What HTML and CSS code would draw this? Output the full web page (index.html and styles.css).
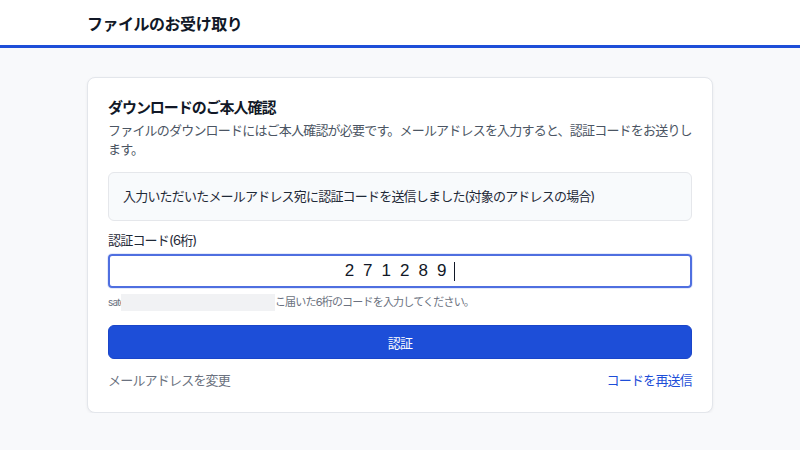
FILE: index.html
```html
<!DOCTYPE html>
<html lang="ja">

<head>
    <meta charset="UTF-8">
    <meta name="viewport" content="width=device-width, initial-scale=1.0">
    <title>ファイルのお受け取り</title>
    <link rel="stylesheet" href="styles.css">
</head>

<body>
    <header class="topbar">
        <div class="topbar-inner">
            <h1>ファイルのお受け取り</h1>
        </div>
    </header>

    <main class="page">
        <section class="card">
            <h2>ダウンロードのご本人確認</h2>
            <p class="lead">ファイルのダウンロードにはご本人確認が必要です。メールアドレスを入力すると、認証コードをお送りします。</p>

            <div class="notice">入力いただいたメールアドレス宛に認証コードを送信しました(対象のアドレスの場合)</div>

            <label class="label" for="code">認証コード(6桁)</label>
            <div class="code-field" id="code">
                <span class="digits">271289</span><span class="caret"></span>
            </div>
            <p class="hint"><span class="addr">sato</span><span class="mask"></span>こ届いた6桁のコードを入力してください。</p>

            <button class="btn">認証</button>

            <div class="links">
                <a href="#" class="link-muted">メールアドレスを変更</a>
                <a href="#" class="link-blue">コードを再送信</a>
            </div>
        </section>
    </main>
</body>

</html>
```

FILE: styles.css
```css
* {
    margin: 0;
    padding: 0;
    box-sizing: border-box;
}

body {
    background-color: #f8f9fb;
    color: #111827;
    font-family: "Inter", "Noto Sans CJK JP", sans-serif;
    letter-spacing: -0.05em;
}

.topbar {
    background-color: #ffffff;
    border-bottom: 3px solid #1d4ed8;
}

.topbar-inner {
    max-width: 626px;
    height: 45px;
    margin: 0 auto;
    display: flex;
    align-items: center;
}

.topbar h1 {
    font-size: 16px;
    font-weight: 700;
    color: #111827;
    letter-spacing: -0.03em;
}

.page {
    max-width: 626px;
    margin: 29px auto 0;
}

.card {
    background-color: #ffffff;
    border: 1px solid #e3e6eb;
    border-radius: 8px;
    box-shadow: 0 1px 3px rgba(15, 23, 42, 0.06);
    padding: 19px 20px 22px;
    display: flex;
    flex-direction: column;
}

.card h2 {
    font-size: 15px;
    font-weight: 700;
    line-height: 22px;
    color: #111827;
    letter-spacing: -0.07em;
}

.lead {
    margin-top: 2px;
    font-size: 13px;
    line-height: 19px;
    color: #4b5563;
}

.notice {
    margin-top: 13px;
    padding: 14px 14px;
    background-color: #f8fafc;
    border: 1px solid #e5e7eb;
    border-radius: 6px;
    font-size: 13px;
    line-height: 19px;
    color: #1f2937;
}

.label {
    margin-top: 10px;
    font-size: 13px;
    line-height: 19px;
    color: #1f2937;
}

.code-field {
    margin-top: 4px;
    height: 34px;
    border: 2px solid #4f6fe0;
    border-radius: 4px;
    display: flex;
    align-items: center;
    justify-content: center;
    box-shadow: 0 0 0 1px rgba(79, 111, 224, 0.15);
}

.digits {
    font-family: "Liberation Sans", sans-serif;
    font-size: 17px;
    letter-spacing: 9px;
    color: #111827;
}

.caret {
    width: 1px;
    height: 19px;
    background-color: #111827;
    margin-left: -1px;
}

.hint {
    margin-top: 6px;
    font-size: 11px;
    line-height: 17px;
    color: #6b7280;
    display: flex;
    align-items: center;
}

.addr {
    font-size: 10px;
}

.mask {
    display: inline-block;
    width: 154px;
    height: 17px;
    margin-left: -4px;
    background-color: #f1f2f4;
}

.btn {
    margin-top: 14px;
    height: 34px;
    border: 1px solid #1a45c9;
    border-radius: 6px;
    background-color: #1d4ed8;
    color: #ffffff;
    font-family: inherit;
    font-size: 13px;
    letter-spacing: inherit;
}

.links {
    margin-top: 12px;
    display: flex;
    justify-content: space-between;
    font-size: 13px;
    line-height: 19px;
}

.links a {
    text-decoration: none;
}

.link-muted {
    color: #6b7280;
}

.link-blue {
    color: #1d4ed8;
}
```
